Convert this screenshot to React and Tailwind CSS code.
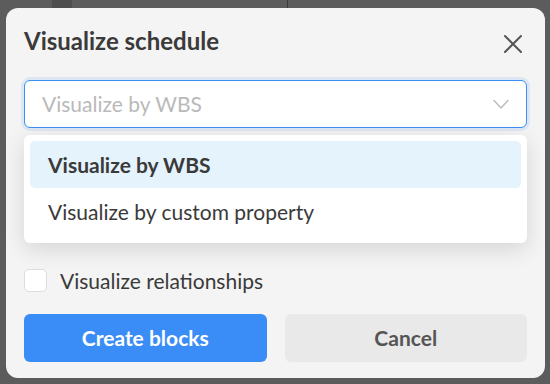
import React from 'react';

function CloseIcon() {
  return (
    <svg width="18" height="18" viewBox="0 0 18 18" fill="none">
      <path d="M1 1L17 17M17 1L1 17" stroke="#555555" strokeWidth="2" strokeLinecap="round" />
    </svg>
  );
}

function Chevron() {
  return (
    <svg width="16" height="11" viewBox="0 0 16 11" fill="none">
      <path d="M1 1.5L8 9L15 1.5" stroke="#bdbdbd" strokeWidth="1.5" strokeLinecap="round" strokeLinejoin="round" />
    </svg>
  );
}

const options = [
  { label: 'Visualize by WBS', active: true },
  { label: 'Visualize by custom property', active: false },
];

export default function App() {
  return (
    <div
      className="relative w-[550px] h-[384px] overflow-hidden bg-[#5c5c5c] pt-[8px] pl-[6px]"
      style={{ fontFamily: 'Lato, "Noto Sans", sans-serif' }}
    >
      {/* faint drawing behind the modal */}
      <div className="absolute left-[52px] top-0 w-[20px] h-[8px] bg-[#4e4e4e]" />
      <div className="absolute left-[287px] top-0 w-px h-[8px] bg-[#3a3a3a]" />

      <div className="relative w-[539px] h-[370px] bg-[#f4f4f4] rounded-[12px] px-[18px] pt-[17px] flex flex-col">
        <div className="flex items-start justify-between">
          <h2 className="text-[24px] leading-[32px] font-bold text-[#3a3a3a]">Visualize schedule</h2>
          <button className="mt-[10px] mr-[5px]">
            <CloseIcon />
          </button>
        </div>

        <div className="mt-[23px] h-[48px] flex items-center justify-between rounded-[6px] border border-[#3d8ef2] bg-white pl-[17px] pr-[17px] shadow-[0_0_0_3px_rgba(61,142,242,0.12)]">
          <span className="text-[21px] leading-[26px] text-[#b9b9b9]">Visualize by WBS</span>
          <Chevron />
        </div>

        <div className="mt-[7px] rounded-[6px] bg-white px-[6px] pt-[6px] pb-[8px] shadow-[0_6px_22px_rgba(0,0,0,0.13)]">
          {options.map((o) => (
            <div
              key={o.label}
              className={`h-[47px] flex items-center rounded-[5px] pl-[18px] text-[21px] text-[#3a3a3a] ${
                o.active ? 'bg-[#e5f3fd] font-bold' : ''
              }`}
            >
              {o.label}
            </div>
          ))}
        </div>

        <label className="mt-[26px] h-[23px] flex items-center gap-[13px]">
          <span className="w-[23px] h-[23px] rounded-[5px] border border-[#dddddd] bg-white" />
          <span className="text-[21px] leading-[23px] text-[#3a3a3a]">Visualize relationships</span>
        </label>

        <div className="mt-[22px] grid grid-cols-2 gap-[18px]">
          <button className="h-[48px] rounded-[6px] bg-[#3a8cf6] text-white text-[21px] font-bold">
            Create blocks
          </button>
          <button className="h-[48px] rounded-[6px] bg-[#e9e9e9] text-[#555555] text-[21px] font-bold">
            Cancel
          </button>
        </div>
      </div>
    </div>
  );
}
